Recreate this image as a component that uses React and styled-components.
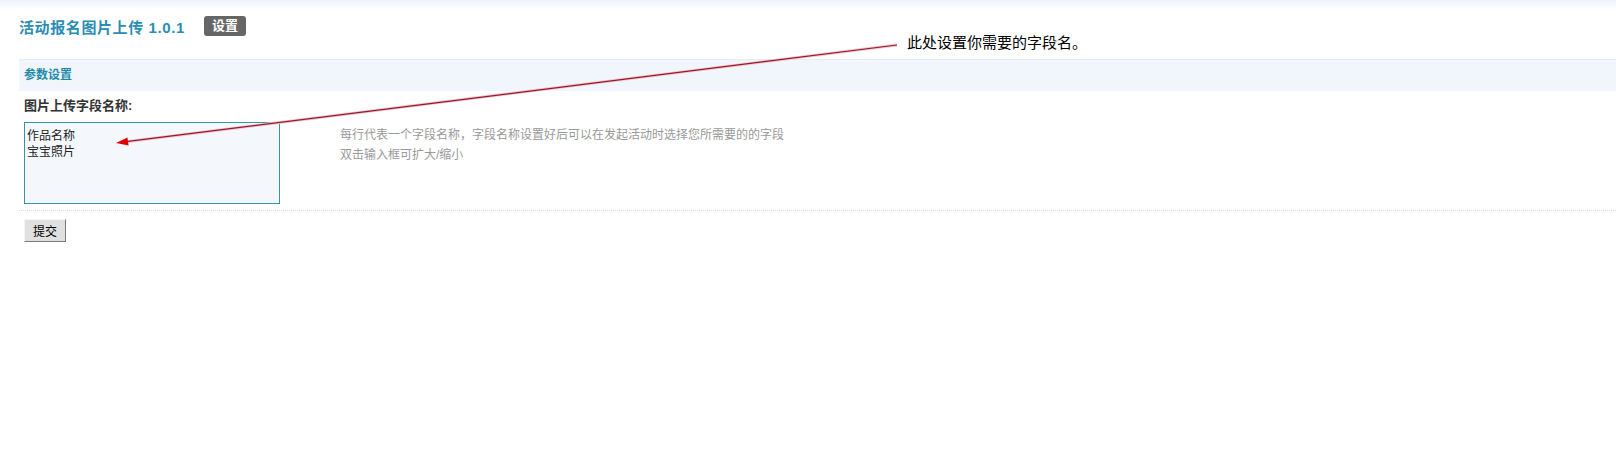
import React from 'react'
import styled, { createGlobalStyle } from 'styled-components'

const GlobalStyle = createGlobalStyle`
  body {
    margin: 0;
    background: #fff;
    font-family: 'Liberation Sans', 'Noto Sans CJK SC', sans-serif;
    font-size: 12px;
    color: #333;
  }
`

const App = () => {
  return (
    <Page>
      <GlobalStyle />
      <Header>
        <Title>活动报名图片上传 1.0.1</Title>
        <Badge>设置</Badge>
      </Header>
      <Main>
        <SectionHeader>参数设置</SectionHeader>
        <FieldLabel>图片上传字段名称:</FieldLabel>
        <FieldRow>
          <TextArea defaultValue={'作品名称\n宝宝照片'} />
          <Hint>
            每行代表一个字段名称，字段名称设置好后可以在发起活动时选择您所需要的的字段
            <br />
            双击输入框可扩大/缩小
          </Hint>
        </FieldRow>
        <ButtonRow>
          <SubmitButton>提交</SubmitButton>
        </ButtonRow>
      </Main>

      <Callout>此处设置你需要的字段名。</Callout>
      <ArrowLayer width='1616' height='467' viewBox='0 0 1616 467'>
        <line x1='897' y1='45' x2='126' y2='141.7' stroke='#f7c4cc' strokeWidth='3' />
        <line x1='897' y1='45' x2='126' y2='141.7' stroke='#8c1c2e' strokeWidth='1.2' />
        <polygon points='116,143 128.6,145.6 127.4,137.4' fill='#e00000' />
      </ArrowLayer>
    </Page>
  )
}

const Page = styled.div`
  position: relative;
  min-height: 467px;
  background: linear-gradient(#eaf3fb 0, #ffffff 10px) no-repeat;
`

const Header = styled.div`
  display: flex;
  align-items: center;
  height: 52px;
  margin-bottom: 7px;
  padding-left: 19px;
`

const Title = styled.h3`
  margin: 0;
  font-size: 15px;
  font-weight: bold;
  letter-spacing: 0.6px;
  color: #2a8db3;
`

const Badge = styled.span`
  margin-left: 19px;
  padding: 0 8px;
  height: 20px;
  line-height: 20px;
  border-radius: 3px;
  background: #666;
  color: #fff;
  font-weight: bold;
  font-size: 13px;
`

const Main = styled.div`
  margin-left: 19px;
`

const SectionHeader = styled.div`
  height: 31px;
  line-height: 31px;
  padding-left: 5px;
  border-top: 1px solid #e4edf5;
  background: #f0f6fc;
  color: #1f8aa8;
  font-weight: bold;
  font-size: 12px;
`

const FieldLabel = styled.div`
  padding: 7px 5px 8px;
  line-height: 16px;
  font-size: 13px;
  font-weight: bold;
  color: #333;
`

const FieldRow = styled.div`
  display: flex;
  align-items: flex-start;
  padding: 0 5px 6px;
  border-bottom: 1px dotted #dcdcdc;
`

const TextArea = styled.textarea`
  box-sizing: border-box;
  width: 256px;
  height: 82px;
  margin: 0;
  padding: 5px 2px 2px;
  border: 1px solid #3397a8;
  background: #f4f8fc;
  font-family: 'Liberation Sans', 'Noto Sans CJK SC', sans-serif;
  font-size: 12px;
  font-weight: 400;
  line-height: 16px;
  color: #222;
  resize: none;
  outline: none;
`

const Hint = styled.div`
  margin-left: 60px;
  padding-top: 3px;
  line-height: 20px;
  color: #999;
`

const ButtonRow = styled.div`
  padding: 8px 5px 0;
`

const SubmitButton = styled.button`
  width: 42px;
  height: 23px;
  padding: 0;
  border: 1px solid;
  border-color: #f4f4f4 #7a7a7a #7a7a7a #f4f4f4;
  background: #e0e0e0;
  color: #000;
  font-family: 'Liberation Sans', 'Noto Sans CJK SC', sans-serif;
  font-size: 12px;
`

const Callout = styled.div`
  position: absolute;
  left: 907px;
  top: 31px;
  font-size: 15px;
  color: #000;
  white-space: nowrap;
`

const ArrowLayer = styled.svg`
  position: absolute;
  left: 0;
  top: 0;
  pointer-events: none;
`

export default App
